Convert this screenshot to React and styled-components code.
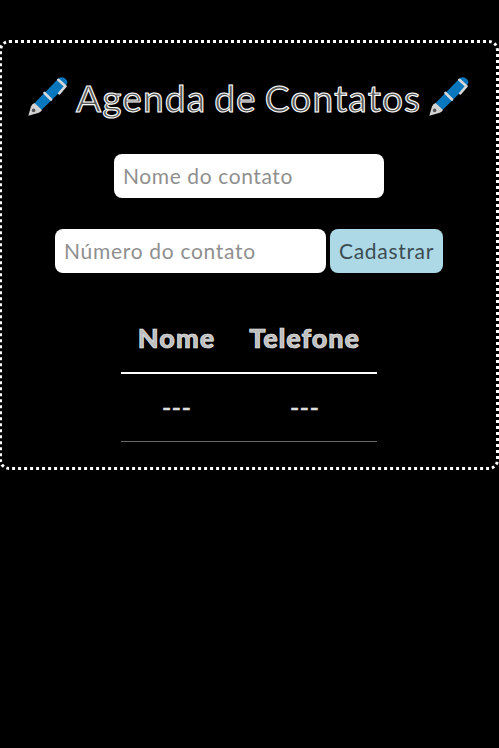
import React from "react";
import styled, { createGlobalStyle } from "styled-components";

const GlobalStyle = createGlobalStyle`
  * { box-sizing: border-box; }
  body { margin: 0; background: #000; color: #fff; font-family: Lato, sans-serif; overflow-x: hidden; }
`;

const Panel = styled.main`
  margin-top: 40px;
  margin-left: -1px;
  height: 430px;
  border: 3px dotted #fff;
  border-radius: 10px;
`;

const Header = styled.header`
  display: flex;
  justify-content: center;
  align-items: center;
  gap: 7px;
  height: 48px;
  margin-top: 31px;
  padding-right: 1px;
`;

const Title = styled.h1`
  margin: 0;
  width: 347px;
  padding-left: 1px;
  font-size: 37px;
  line-height: 48px;
  font-weight: 400;
  letter-spacing: 1.15px;
  word-spacing: -2.6px;
  white-space: nowrap;
  color: #555;
  -webkit-text-stroke: 1.1px #fff;
`;

const PenIcon = styled.svg`
  width: 40px;
  height: 40px;
  flex: none;
  margin-bottom: 2px;
`;

const Form = styled.form`
  display: flex;
  flex-direction: column;
  align-items: center;
  gap: 31px;
  margin-top: 32px;
`;

const FormRow = styled.div`
  display: flex;
  gap: 4px;
`;

const Field = styled.input`
  width: ${(p) => p.$width}px;
  height: 44px;
  padding: 0 9px 2px;
  border: 0;
  border-radius: 8px;
  background: #fff;
  font: 400 21px Lato, sans-serif;
  letter-spacing: ${(p) => p.$spacing}px;
  &::placeholder { color: #8f8f8f; opacity: 1; }
`;

const Submit = styled.button`
  width: 113px;
  height: 44px;
  padding: 0 0 2px;
  border: 0;
  border-radius: 8px;
  background: lightblue;
  color: #3b4d53;
  font: 400 21px Lato, sans-serif;
  letter-spacing: 0.7px;
`;

const Table = styled.table`
  width: 256px;
  margin: 32px auto 0;
  border-collapse: separate;
  border-spacing: 0;
  table-layout: fixed;
`;

const HeadCell = styled.th`
  width: ${(p) => p.$width}px;
  height: 69px;
  padding: 0 0 2px;
  border-bottom: 2px solid #fff;
  font-size: 27px;
  font-weight: 900;
  letter-spacing: ${(p) => p.$spacing}px;
  color: #bdbdbd;
  -webkit-text-stroke: 0.7px #ececec;
`;

const Cell = styled.td`
  height: 68px;
  padding: 0 0 2px;
  border-bottom: 1px solid #686868;
  text-align: center;
  font-size: 26px;
  letter-spacing: 0.2px;
  color: #ddd;
  -webkit-text-stroke: 0.4px #ddd;
`;

function Pen() {
  return (
    <PenIcon viewBox="0 0 40 40" aria-hidden="true">
      <path d="M6.2 26.5 28.5 3.5 31 1Q35-1 38 2.3T37.5 8.5L36 11 13.5 33Z" fill="#0877bd" />
      <path d="M.3 38.8 3 29.5Q4 26.8 6.6 26L14 33Q12.5 35.4 10 36Z" fill="#d3d3d3" />
      <circle cx="5.6" cy="33.4" r="1.8" fill="#555" />
      <path d="m16.5 16 6.5 6.5M30.3 2.8l7.2 6.4-6.3 7.1" fill="none" stroke="#d6d8da" strokeWidth="2.6" strokeLinecap="round" strokeLinejoin="round" />
    </PenIcon>
  );
}

export default function App() {
  return (
    <>
      <GlobalStyle />
      <Panel>
        <Header>
          <Pen />
          <Title>Agenda de Contatos</Title>
          <Pen />
        </Header>
        <Form>
          <Field $width={270} $spacing={0.6} placeholder="Nome do contato" />
          <FormRow>
            <Field $width={271} $spacing={0.7} placeholder="Número do contato" />
            <Submit type="button">Cadastrar</Submit>
          </FormRow>
        </Form>
        <Table>
          <thead>
            <tr>
              <HeadCell $width={111} $spacing={1}>Nome</HeadCell>
              <HeadCell $width={145} $spacing={0.9}>Telefone</HeadCell>
            </tr>
          </thead>
          <tbody>
            <tr>
              <Cell>---</Cell>
              <Cell>---</Cell>
            </tr>
          </tbody>
        </Table>
      </Panel>
    </>
  );
}
